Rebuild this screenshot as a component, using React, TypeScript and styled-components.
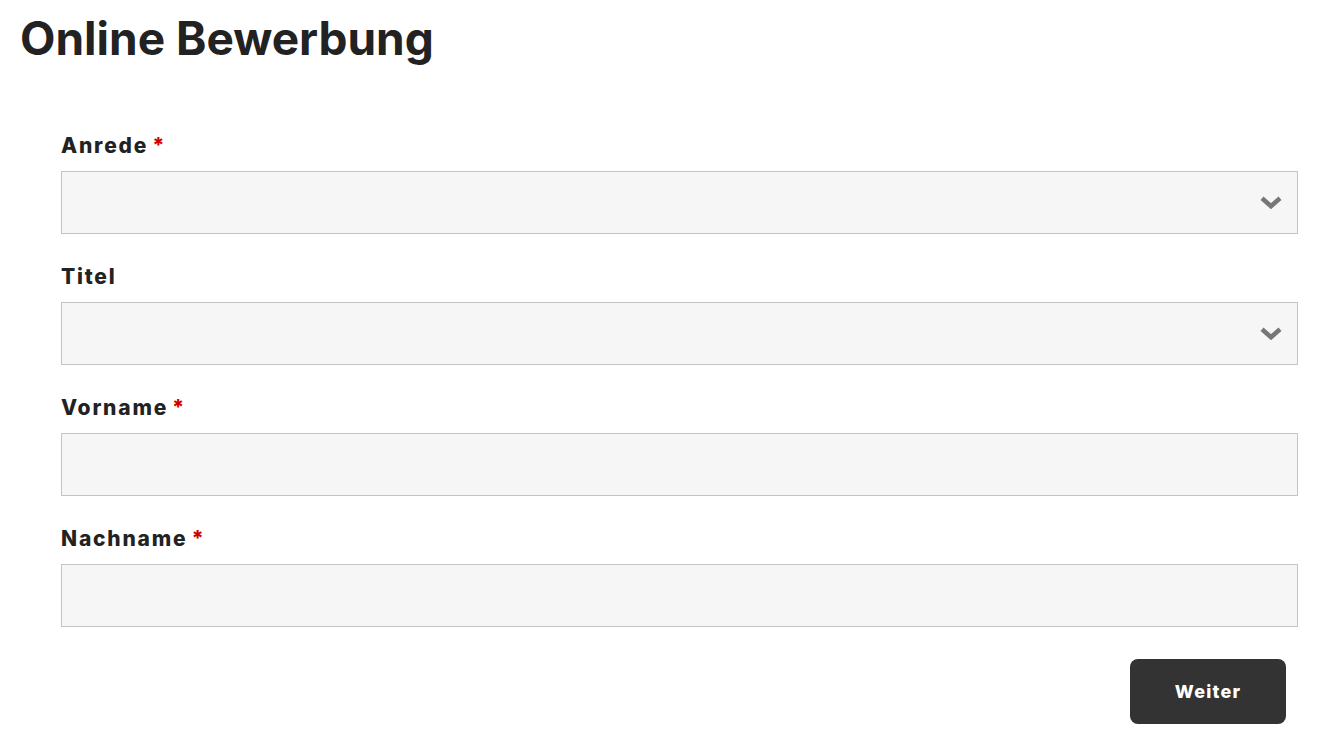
import React from "react";
import styled, { createGlobalStyle } from "styled-components";

const Global = createGlobalStyle`
  html, body { margin: 0; padding: 0; background: #fff; }
  body { font-family: Inter, "Noto Sans", sans-serif; color: #222; }
  * { box-sizing: border-box; }
`;

const Page = styled.div`
  padding: 10px 43px 0 20px;
`;

const Title = styled.h1`
  margin: 0;
  font-size: 46px;
  font-weight: 700;
  line-height: 56px;
  letter-spacing: 0;
  color: #222;
`;

const Form = styled.form`
  margin: 65px 0 0 41px;
  display: flex;
  flex-direction: column;
  gap: 28px;
`;

const Field = styled.div`
  display: flex;
  flex-direction: column;
  gap: 10px;
`;

const Label = styled.label`
  font-size: 21px;
  font-weight: 800;
  line-height: 30px;
  letter-spacing: 1.8px;
  color: #222;
`;

const Star = styled.span`
  color: #d00000;
  margin-left: 4px;
`;

const Box = styled.div`
  position: relative;
  height: 63px;
  border: 1px solid #c4c4c4;
  background: #f6f6f6;
`;

const Chevron = styled.svg`
  position: absolute;
  right: 14px;
  top: 50%;
  transform: translateY(-55%);
`;

const Actions = styled.div`
  display: flex;
  justify-content: flex-end;
  padding-right: 12px;
  margin-top: 4px;
`;

const Button = styled.button`
  width: 156px;
  height: 65px;
  border: none;
  border-radius: 8px;
  background: #333;
  color: #fff;
  font-family: inherit;
  font-size: 18px;
  font-weight: 800;
  letter-spacing: 1.2px;
`;

const fields: { label: string; required: boolean; select: boolean }[] = [
  { label: "Anrede", required: true, select: true },
  { label: "Titel", required: false, select: true },
  { label: "Vorname", required: true, select: false },
  { label: "Nachname", required: true, select: false },
];

export default function App() {
  return (
    <Page>
      <Global />
      <Title>Online Bewerbung</Title>
      <Form>
        {fields.map((f) => (
          <Field key={f.label}>
            <Label>
              {f.label}
              {f.required && <Star>*</Star>}
            </Label>
            <Box>
              {f.select && (
                <Chevron width="24" height="16" viewBox="0 0 24 16">
                  <path d="M3 4 L12 12 L21 4" fill="none" stroke="#777" strokeWidth="4.5" />
                </Chevron>
              )}
            </Box>
          </Field>
        ))}
        <Actions>
          <Button type="button">Weiter</Button>
        </Actions>
      </Form>
    </Page>
  );
}
